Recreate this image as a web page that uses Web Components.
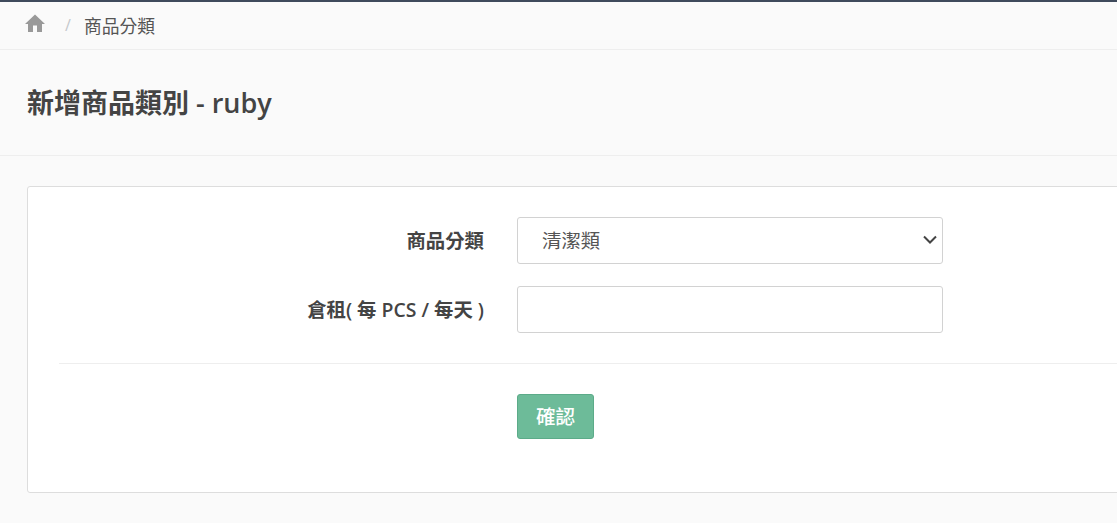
<!DOCTYPE html>
<html lang="zh-Hant">
<head>
<meta charset="utf-8">
<title>新增商品類別</title>
<style>
html, body { margin: 0; padding: 0; height: 100%; overflow: hidden; background: #fafafa; }
body { font-family: "Open Sans", "Noto Sans CJK TC", sans-serif; color: #444; border-top: 2px solid #3f4a5c; box-sizing: border-box; }
</style>
</head>
<body>
<bread-crumb>商品分類</bread-crumb>
<page-heading>新增商品類別 - ruby</page-heading>
<form-card>
    <form-row label="商品分類"><category-select value="清潔類"></category-select></form-row>
    <form-row label="倉租( 每 PCS / 每天 )"><text-field></text-field></form-row>
    <confirm-button slot="actions">確認</confirm-button>
</form-card>

<script>
class BreadCrumb extends HTMLElement {
    constructor() {
        super();
        this.shadowDOM = this.attachShadow({mode: "open"});
    }

    connectedCallback() {
        this.shadowDOM.innerHTML = `
        <style>
        :host {
            display: flex;
            align-items: center;
            padding: 0 0 2px 25px;
            height: 45px;
            border-bottom: 1px solid #eeeeee;
            font-size: 17.8px;
            color: #555;
        }
        svg { width: 20px; height: 20px; fill: #999; margin-top: -1px; }
        .sep { color: #c4c8cc; margin: 0 13px 0 20px; font-size: 16px; }
        </style>
        <svg viewBox="0 0 20 20"><path d="M10 0.5 L0 10 H3 V18 H8 V11.5 H12 V18 H17 V10 H20 Z"/></svg>
        <span class="sep">/</span>
        <slot></slot>
        `;
    }
}

class PageHeading extends HTMLElement {
    constructor() {
        super();
        this.shadowDOM = this.attachShadow({mode: "open"});
    }

    connectedCallback() {
        this.shadowDOM.innerHTML = `
        <style>
        :host {
            display: flex;
            align-items: center;
            height: 102px;
            padding: 0 0 3px 27px;
            border-bottom: 1px solid #eeeeee;
            font-size: 27px;
            font-weight: 600;
            color: #444;
        }
        </style>
        <slot></slot>
        `;
    }
}

class FormCard extends HTMLElement {
    constructor() {
        super();
        this.shadowDOM = this.attachShadow({mode: "open"});
    }

    connectedCallback() {
        this.shadowDOM.innerHTML = `
        <style>
        :host {
            display: block;
            box-sizing: border-box;
            width: 1400px;
            height: 307px;
            margin: 30px 0 0 27px;
            padding: 30px 31px;
            background: #fff;
            border: 1px solid #dddddd;
            border-radius: 3px;
        }
        .rows { display: flex; flex-direction: column; gap: 22px; }
        hr { border: 0; border-top: 1px solid #eeeeee; margin: 30px 0; }
        .actions { padding-left: 458px; }
        </style>
        <div class="rows"><slot></slot></div>
        <hr>
        <div class="actions"><slot name="actions"></slot></div>
        `;
    }
}

class FormRow extends HTMLElement {
    constructor() {
        super();
        this.shadowDOM = this.attachShadow({mode: "open"});
    }

    connectedCallback() {
        this.shadowDOM.innerHTML = `
        <style>
        :host {
            display: grid;
            grid-template-columns: 425px 426px;
            column-gap: 33px;
            align-items: center;
        }
        label { text-align: right; font-size: 19.4px; font-weight: 600; color: #444; line-height: 47px; height: 47px; }
        </style>
        <label>${this.getAttribute("label")}</label>
        <div><slot></slot></div>
        `;
    }
}

class CategorySelect extends HTMLElement {
    constructor() {
        super();
        this.shadowDOM = this.attachShadow({mode: "open"});
    }

    connectedCallback() {
        this.shadowDOM.innerHTML = `
        <style>
        :host { display: block; position: relative; }
        select {
            display: block;
            appearance: none;
            width: 100%;
            height: 47px;
            box-sizing: border-box;
            padding: 0 24px;
            background: #fff;
            border: 1px solid #d2d2d2;
            border-radius: 3px;
            font: inherit;
            font-size: 19.4px;
            color: #555;
        }
        svg { position: absolute; right: 5px; top: 17px; width: 16px; height: 12px; pointer-events: none; }
        </style>
        <select><option>${this.getAttribute("value")}</option></select>
        <svg viewBox="0 0 16 12"><path d="M2 2.5 L8 8.5 L14 2.5" fill="none" stroke="#444" stroke-width="2"/></svg>
        `;
    }
}

class TextField extends HTMLElement {
    constructor() {
        super();
        this.shadowDOM = this.attachShadow({mode: "open"});
    }

    connectedCallback() {
        this.shadowDOM.innerHTML = `
        <style>
        :host { display: block; }
        input {
            display: block;
            width: 100%;
            height: 47px;
            box-sizing: border-box;
            padding: 0 16px;
            background: #fff;
            border: 1px solid #d2d2d2;
            border-radius: 3px;
            font: inherit;
        }
        </style>
        <input type="text">
        `;
    }
}

class ConfirmButton extends HTMLElement {
    constructor() {
        super();
        this.shadowDOM = this.attachShadow({mode: "open"});
    }

    connectedCallback() {
        this.shadowDOM.innerHTML = `
        <style>
        :host { display: inline-block; }
        button {
            display: block;
            width: 77px;
            height: 45px;
            padding: 0 0 2px;
            background: #6dbb99;
            border: 1px solid #5cab89;
            border-radius: 3px;
            font: inherit;
            font-size: 19.6px;
            font-weight: 500;
            color: #fff;
        }
        </style>
        <button type="submit"><slot></slot></button>
        `;
    }
}

customElements.define("bread-crumb", BreadCrumb);
customElements.define("page-heading", PageHeading);
customElements.define("form-card", FormCard);
customElements.define("form-row", FormRow);
customElements.define("category-select", CategorySelect);
customElements.define("text-field", TextField);
customElements.define("confirm-button", ConfirmButton);
</script>
</body>
</html>
